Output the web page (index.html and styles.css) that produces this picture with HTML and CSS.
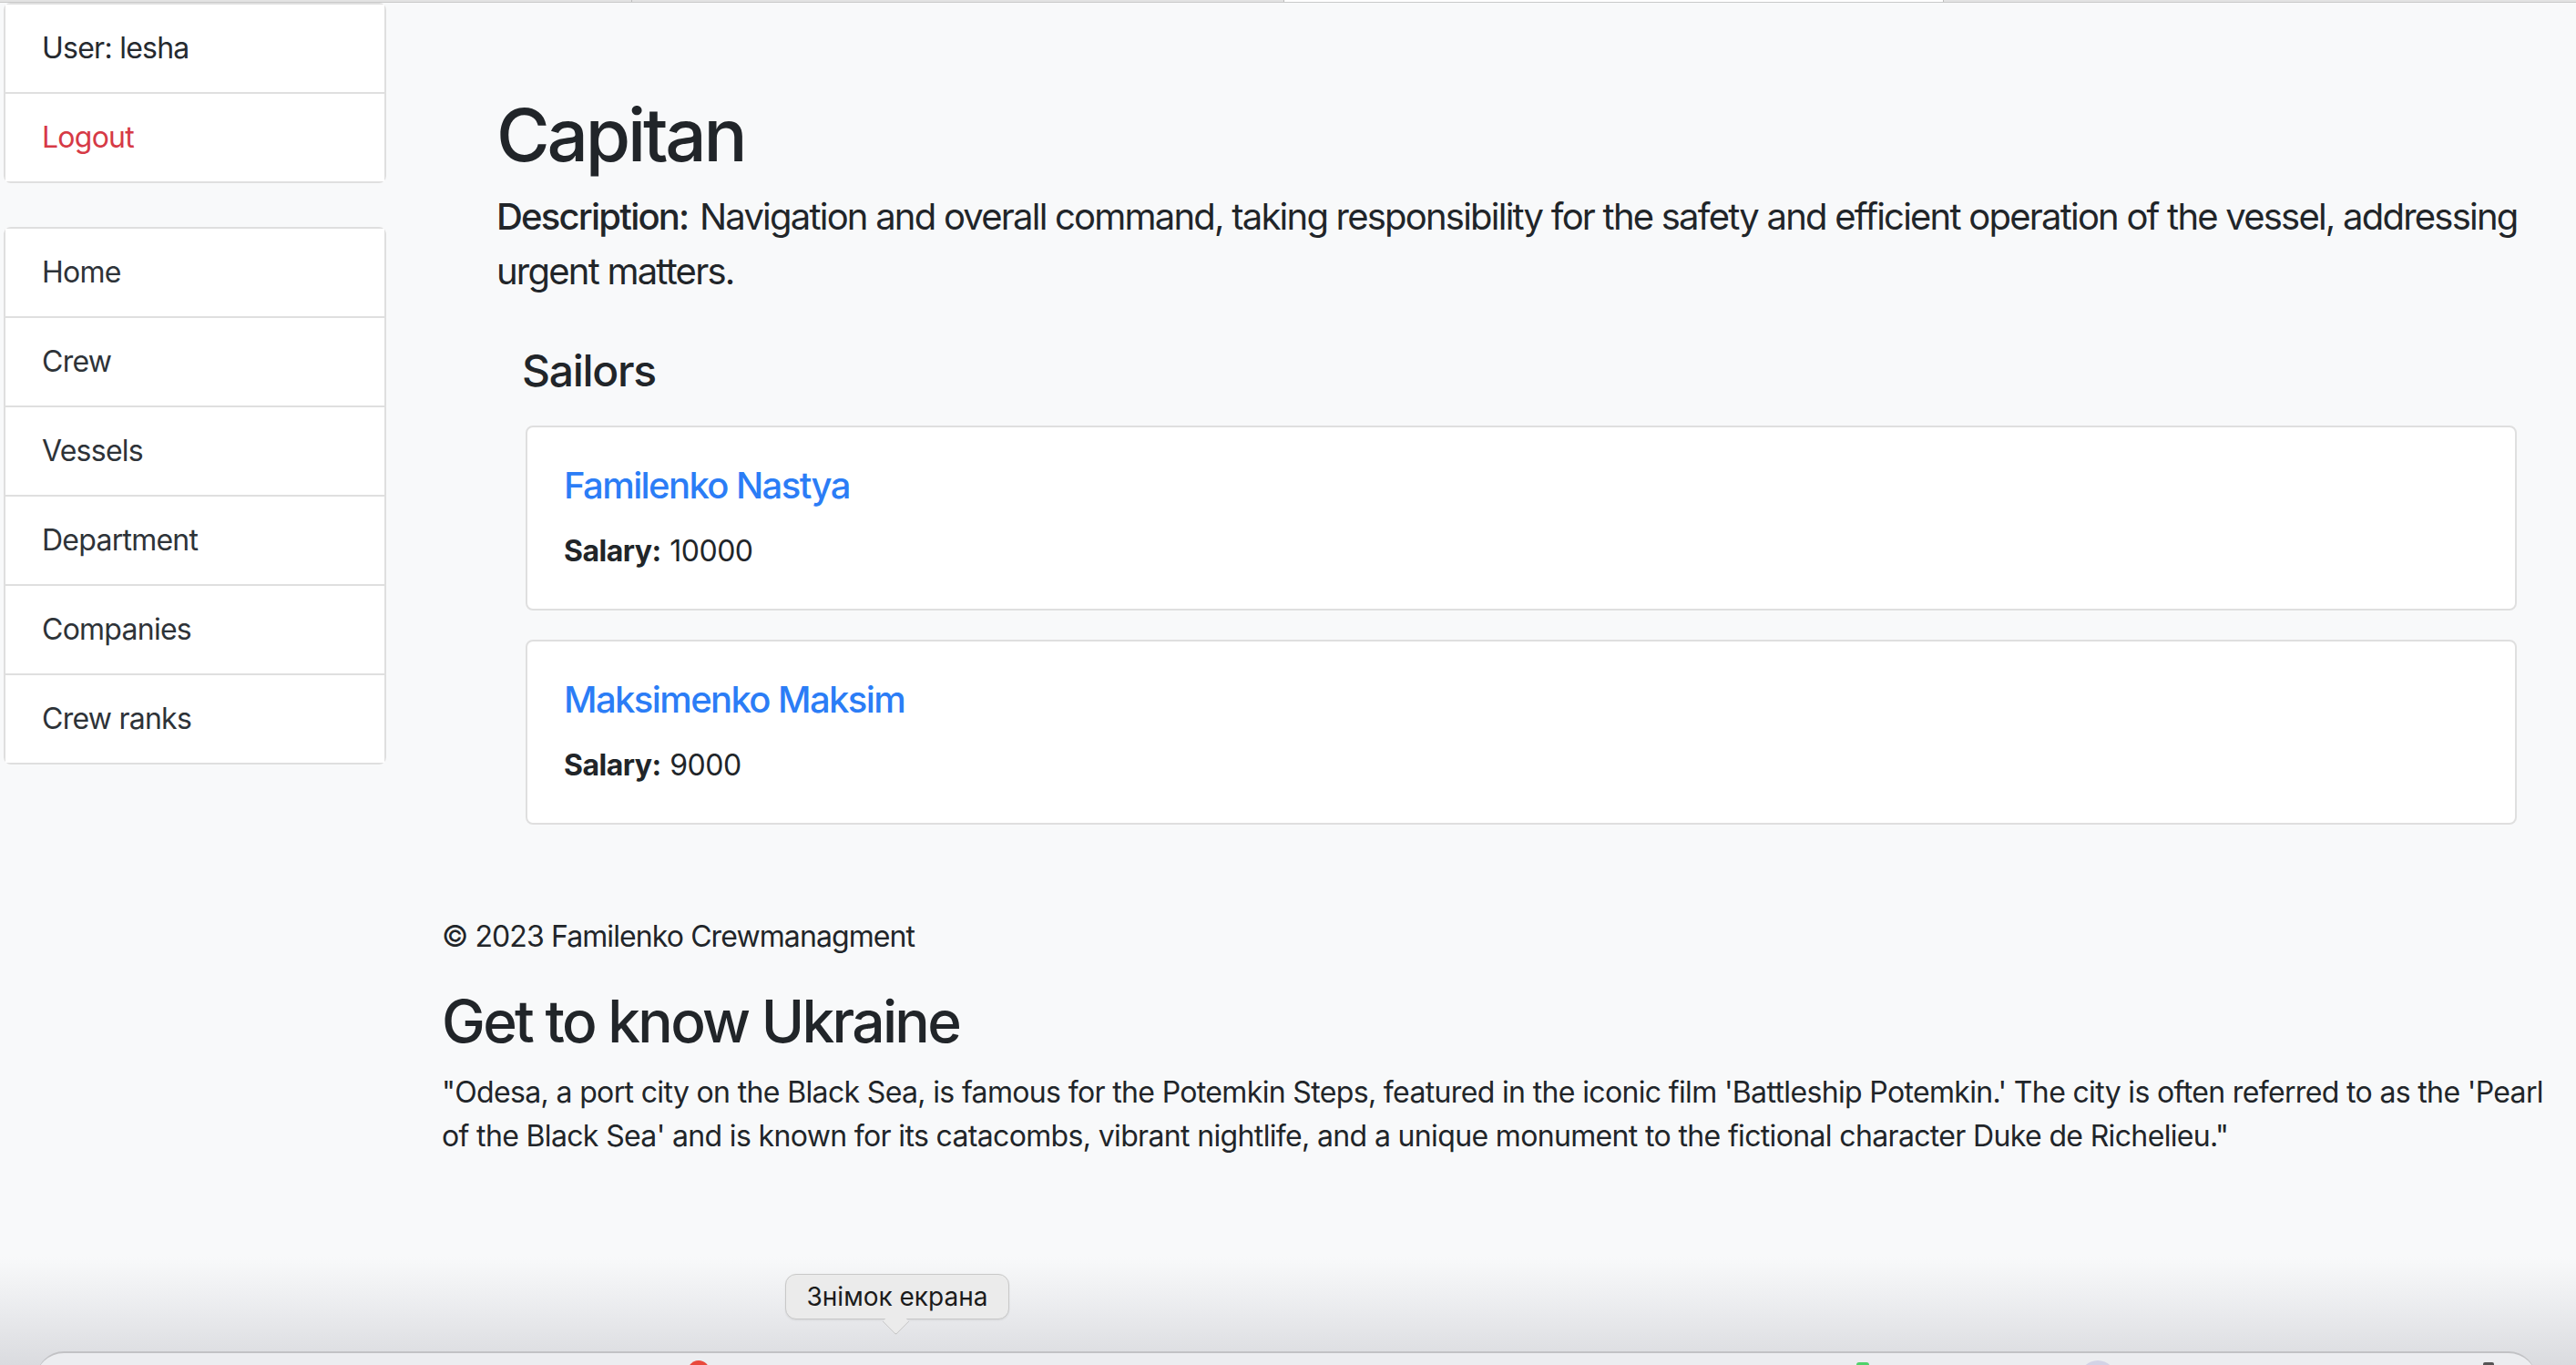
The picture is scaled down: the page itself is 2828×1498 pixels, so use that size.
FILE: index.html
```html
<!DOCTYPE html>
<html lang="en">
<head>
<meta charset="utf-8">
<title>Capitan</title>
<link rel="stylesheet" href="styles.css">
</head>
<body>
<div class="tabstrip">
  <span class="tab t1"></span><span class="tab t2"></span><span class="tab t3 active"></span><span class="tab t4"></span>
</div>
<div class="layout">
  <aside class="sidebar">
    <ul class="list user-list">
      <li class="item">User: lesha</li>
      <li class="item"><a class="logout" href="#">Logout</a></li>
    </ul>
    <ul class="list nav-list">
      <li class="item"><a href="#">Home</a></li>
      <li class="item"><a href="#">Crew</a></li>
      <li class="item"><a href="#">Vessels</a></li>
      <li class="item"><a href="#">Department</a></li>
      <li class="item"><a href="#">Companies</a></li>
      <li class="item"><a href="#">Crew ranks</a></li>
    </ul>
  </aside>
  <main class="main">
    <section class="content">
      <h1 class="title">Capitan</h1>
      <p class="lead"><strong>Description:</strong> Navigation and overall command, taking responsibility for the safety and efficient operation of the vessel, addressing urgent matters.</p>
      <div class="sailors">
        <h4 class="sailors-title">Sailors</h4>
        <div class="card">
          <h5 class="card-title"><a href="#">Familenko Nastya</a></h5>
          <p class="card-text"><strong>Salary:</strong> 10000</p>
        </div>
        <div class="card">
          <h5 class="card-title"><a href="#">Maksimenko Maksim</a></h5>
          <p class="card-text"><strong>Salary:</strong> 9000</p>
        </div>
      </div>
    </section>
    <footer class="footer">
      <p class="copy">© 2023 Familenko Crewmanagment</p>
      <h2 class="know">Get to know Ukraine</h2>
      <p class="fact">"Odesa, a port city on the Black Sea, is famous for the Potemkin Steps, featured in the iconic film 'Battleship Potemkin.' The city is often referred to as the 'Pearl of the Black Sea' and is known for its catacombs, vibrant nightlife, and a unique monument to the fictional character Duke de Richelieu."</p>
    </footer>
  </main>
</div>
<div class="dock-shade">
  <div class="tooltip">Знімок екрана</div>
  <div class="dock">
    <span class="dock-icon red"></span>
    <span class="dock-icon green"></span>
    <span class="dock-icon gray"></span>
    <span class="dock-icon dark"></span>
  </div>
</div>
</body>
</html>
```

FILE: styles.css
```css
html, body {
  margin: 0;
  padding: 0;
}
body {
  width: 2828px;
  height: 1498px;
  overflow: hidden;
  position: relative;
  background: #f8f9fa;
  color: #212529;
  font-family: Inter, "Liberation Sans", sans-serif;
  font-size: 32px;
  line-height: 48px;
  letter-spacing: -0.75px;
}

/* top browser tab strip remnant */
.tabstrip {
  display: flex;
  height: 2px;
  background: #e3e3e3;
  border-bottom: 1px solid #c9c9c9;
}
.tab { display: block; height: 2px; border-right: 1px solid #bdbdbd; }
.t1 { width: 693px; }
.t2 { width: 715px; }
.t3 { width: 723px; }
.t4 { flex: 1; border-right: 0; }
.tab.active { background: #ffffff; }

.layout {
  display: flex;
  align-items: flex-start;
}

/* sidebar */
.sidebar {
  width: 420px;
  margin-left: 4px;
  flex: none;
}
.list {
  list-style: none;
  margin: 0;
  padding: 0;
  border-radius: 8px;
  overflow: hidden;
}
.nav-list { margin-top: 48px; }
.item {
  display: block;
  background: #fff;
  border: 2px solid #dfdfdf;
  padding: 24px 40px;
  line-height: 48px;
  color: #262a2f;
}
.item + .item { border-top-width: 0; }
.item a {
  color: #2e3338;
  text-decoration: none;
}
.item a.logout { color: #d63a46; }

/* main */
.main {
  flex: 1;
  padding-left: 61px;
  padding-right: 15px;
}
.content {
  padding: 97px 20px 0 60px;
}
.title {
  margin: 0 0 12px;
  font-size: 80px;
  line-height: 96px;
  font-weight: 500;
  letter-spacing: -3.2px;
}
.lead {
  margin: 0 0 50px;
  font-size: 40px;
  line-height: 60px;
  font-weight: 400;
  letter-spacing: -1.78px;
}
.lead strong { font-weight: 500; margin-right: 3px; }

.sailors {
  padding: 0 30px 0 32px;
}
.sailors-title {
  margin: 0 0 31px -4px;
  font-size: 48px;
  line-height: 57.6px;
  font-weight: 500;
  letter-spacing: -1.3px;
}
.card {
  background: #fff;
  border: 2px solid #dfdfdf;
  border-radius: 8px;
  padding: 40px 40px 39px;
  margin-bottom: 32px;
}
.card:last-child { margin-bottom: 0; }
.card-title {
  margin: 0 0 24px;
  font-size: 40px;
  line-height: 48px;
  font-weight: 500;
  letter-spacing: -1.6px;
}
.card-title a {
  color: #2b7df6;
  text-decoration: none;
}
.card-text { margin: 0; letter-spacing: -0.5px; }
.card-text strong { font-weight: 700; margin-right: 1px; }

.footer {
  margin-top: 99px;
}
.copy { margin: 0 0 31px; letter-spacing: -0.9px; }
.know {
  margin: 0 0 16px;
  font-size: 64px;
  line-height: 76.8px;
  font-weight: 500;
  letter-spacing: -2.7px;
}
.fact { margin: 0; letter-spacing: -0.65px; }

/* macOS dock overlay at bottom */
.dock-shade {
  position: absolute;
  left: 0;
  right: 0;
  bottom: 0;
  height: 118px;
  background: linear-gradient(to bottom, rgba(240,241,243,0) 0%, rgba(232,233,236,0.7) 40%, rgba(218,219,223,1) 100%);
}
.tooltip {
  position: absolute;
  left: 862px;
  top: 18px;
  width: 246px;
  height: 50px;
  box-sizing: border-box;
  background: #ebebeb;
  border: 1px solid #c8c8c8;
  border-radius: 12px;
  font-family: Inter, "Noto Sans", sans-serif;
  font-size: 28px;
  line-height: 48px;
  letter-spacing: 0;
  text-align: center;
  color: #1b1b1b;
  box-shadow: 0 1px 2px rgba(0,0,0,0.08);
}
.tooltip::after {
  content: "";
  position: absolute;
  left: 110px;
  bottom: -14px;
  width: 20px;
  height: 20px;
  background: #ebebeb;
  border-right: 1px solid #c8c8c8;
  border-bottom: 1px solid #c8c8c8;
  transform: rotate(45deg);
  border-bottom-right-radius: 3px;
}
.dock {
  position: absolute;
  left: 40px;
  right: 44px;
  top: 103px;
  height: 40px;
  background: #ecedf0;
  border-top: 2px solid #c2c2c5;
  border-radius: 30px 30px 0 0;
  overflow: hidden;
}
.dock-icon {
  position: absolute;
  top: 8px;
  border-radius: 50%;
}
.dock-icon.red { left: 715px; width: 24px; height: 24px; background: #e9493c; }
.dock-icon.green { left: 1998px; width: 14px; height: 14px; top: 10px; background: #4fd26a; border-radius: 3px; }
.dock-icon.gray { left: 2243px; width: 40px; height: 40px; background: #d3d3e6; }
.dock-icon.dark { left: 2686px; width: 12px; height: 12px; top: 10px; background: #555; border-radius: 2px; }
```
